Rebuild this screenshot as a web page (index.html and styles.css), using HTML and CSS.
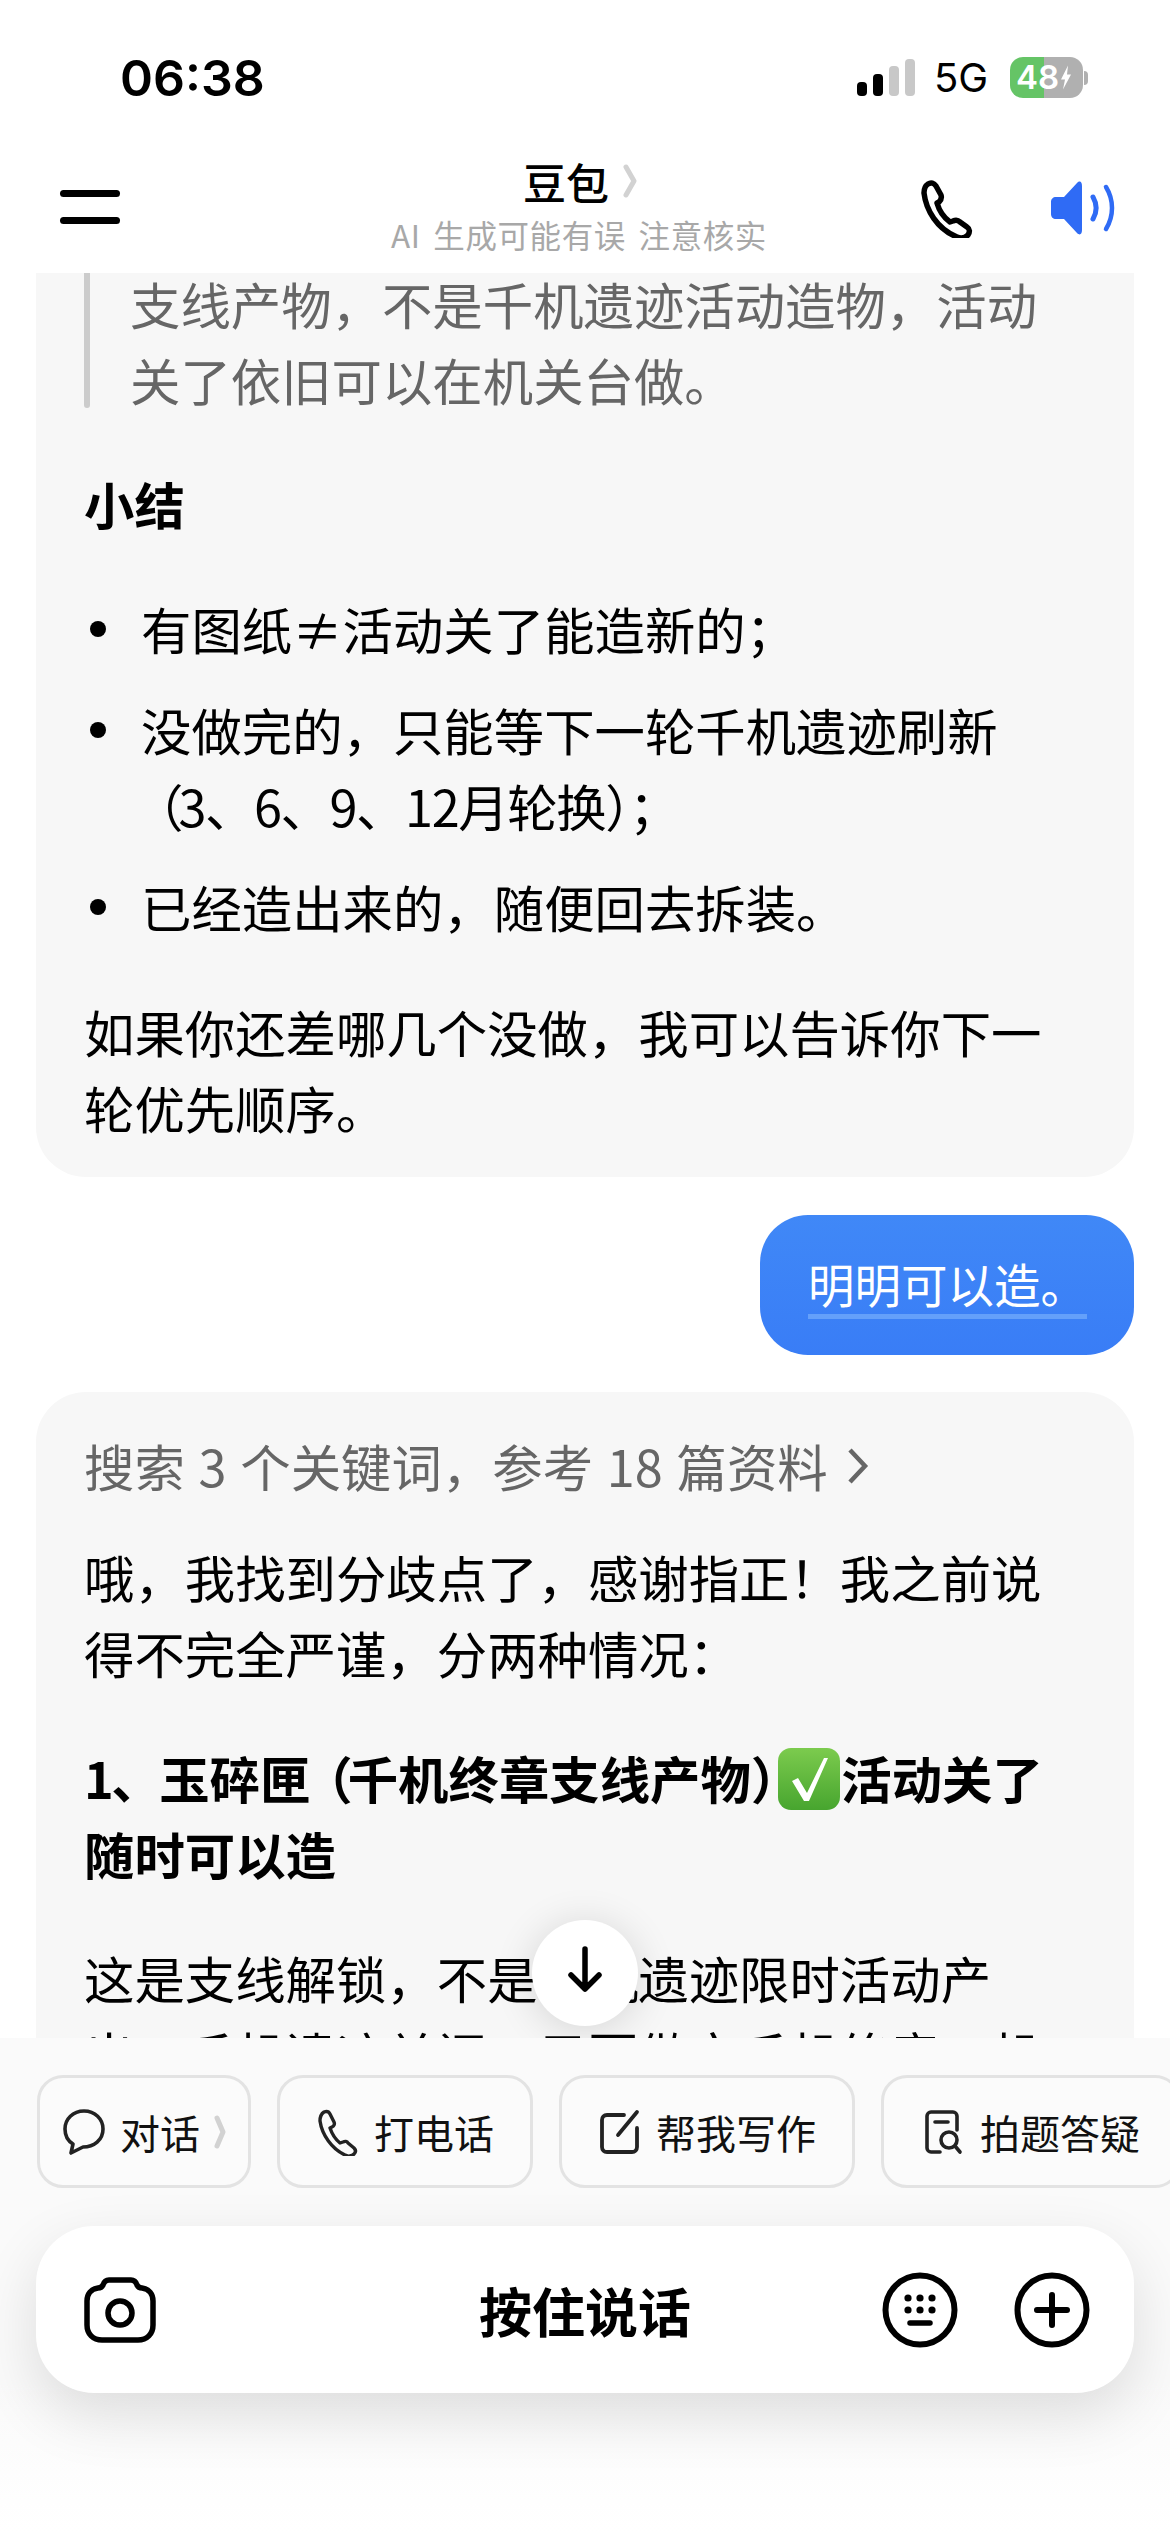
FILE: index.html
```html
<!DOCTYPE html>
<html lang="zh">
<head>
<meta charset="utf-8">
<title>豆包</title>
<link rel="stylesheet" href="styles.css">
</head>
<body>
<div class="page">
  <div class="status">
    <span class="time">06:38</span>
    <div class="status-right">
      <div class="signal"><i class="on b1"></i><i class="on b2"></i><i class="b3"></i><i class="b4"></i></div>
      <span class="net">5G</span>
      <div class="battery"><span class="batt-text">48</span><svg class="bolt" viewBox="0 0 12 24"><path d="M8 0 1 14h4l-2 10 8-15H7z" fill="#fff"/></svg></div>
      <i class="nub"></i>
    </div>
  </div>

  <header class="nav">
    <div class="menu"><i></i><i></i></div>
    <div class="title">
      <div class="title-row"><span class="name">豆包</span><svg class="title-chev" viewBox="0 0 14 34"><path d="M3 3l8 14-8 14" fill="none" stroke="#d2d2d2" stroke-width="5" stroke-linecap="round" stroke-linejoin="round"/></svg></div>
      <div class="sub">AI 生成可能有误 注意核实</div>
    </div>
    <div class="nav-actions">
      <svg class="ic-phone" viewBox="0 0 58 58"><path d="M8 4c3-2 6-1 8 2l5 9c1 3 0 5-2 7l-2 1c2 7 6 14 13 19l3-1c2-1 5-1 7 1l7 5c3 2 3 5 1 8-3 3-7 4-11 2C17 49 6 30 4 13c0-4 1-7 4-9z" fill="none" stroke="#000" stroke-width="5.5" stroke-linejoin="round"/></svg>
      <svg class="ic-sound" viewBox="0 0 64 54"><path d="M26 2c3-3 5-1 5 3v44c0 4-2 6-5 3L13 38H5c-3 0-5-2-5-5V21c0-3 2-5 5-5h8z" fill="#2f6bf5"/><path d="M42 16c4 7 4 15 0 22" fill="none" stroke="#2f6bf5" stroke-width="5" stroke-linecap="round"/><path d="M55 6c8 13 8 29 0 42" fill="none" stroke="#2f6bf5" stroke-width="4.5" stroke-linecap="round"/></svg>
    </div>
  </header>

  <main class="chat">
    <section class="card first">
      <blockquote class="quote">支线产物&#xFF0C;不是千机遗迹活动造物&#xFF0C;活动关了依旧可以在机关台做。</blockquote>
      <p class="strong">小结</p>
      <ul class="list">
        <li>有图纸≠活动关了能造新的&#xFF1B;</li>
        <li>没做完的&#xFF0C;只能等下一轮千机遗迹刷新<span class="open-paren">&#xFF08;</span><span class="dates">3、6、9、12月轮换&#xFF09;&#xFF1B;</span></li>
        <li>已经造出来的&#xFF0C;随便回去拆装。</li>
      </ul>
      <p class="para">如果你还差哪几个没做&#xFF0C;我可以告诉你下一轮优先顺序。</p>
    </section>

    <div class="user-row"><div class="bubble"><span class="bubble-text">明明可以造。</span></div></div>

    <section class="card second">
      <div class="search">搜索 3 个关键词&#xFF0C;参考 18 篇资料<svg class="search-chev" viewBox="0 0 24 40"><path d="M4 4l15 16L4 36" fill="none" stroke="#666" stroke-width="4.5"/></svg></div>
      <p class="para tight">哦&#xFF0C;我找到分歧点了&#xFF0C;感谢指正&#xFF01;我之前说得不完全严谨&#xFF0C;分两种情况&#xFF1A;</p>
      <p class="strong heading"><span class="num">1、</span>玉碎匣<span class="open-paren">&#xFF08;</span>千机终章支线产物<span class="close-paren">&#xFF09;</span><svg class="check" viewBox="0 0 64 64"><defs><linearGradient id="g" x1="0" y1="0" x2="0" y2="1"><stop offset="0" stop-color="#7ccb4e"/><stop offset="1" stop-color="#47a52f"/></linearGradient></defs><rect x="1" y="1" width="62" height="62" rx="13" fill="url(#g)"/><path d="M15 34l6-3 9 15L47 11h4L32 54h-5z" fill="#fff"/></svg>活动关了随时可以造</p>
      <p class="para">这是支线解锁&#xFF0C;不是千机遗迹限时活动产出。千机遗迹关闭&#xFF0C;只要做完千机终章&#xFF0C;机关台依然可以造。</p>
    </section>

    <button class="scroll-down" type="button"><svg viewBox="0 0 40 50"><path d="M20 4v40M6 30l14 14 14-14" fill="none" stroke="#000" stroke-width="5.5" stroke-linecap="round" stroke-linejoin="round"/></svg></button>
  </main>

  <footer class="dock">
    <div class="chips">
      <div class="chip c1"><svg class="chip-ic" viewBox="0 0 44 48"><path d="M22 3c11 0 19 8 19 18 0 11-9 18-20 18l-12 6 2-9C6 33 3 28 3 21 3 11 11 3 22 3z" fill="none" stroke="#222" stroke-width="3.6" stroke-linejoin="round"/></svg><span>对话</span><svg class="chip-chev" viewBox="0 0 12 34"><path d="M3 3l6 14-6 14" fill="none" stroke="#d2d2d2" stroke-width="5" stroke-linecap="round" stroke-linejoin="round"/></svg></div>
      <div class="chip c2"><svg class="chip-ic" viewBox="0 0 44 48"><path d="M8 4c3-1 5 0 6 2l4 8c1 2 0 4-2 5l-2 1c2 6 5 11 10 15l3-1c2-1 4-1 5 1l6 5c2 2 2 4 0 6-2 2-6 3-9 1C16 41 6 27 4 13c0-4 1-7 4-9z" fill="none" stroke="#222" stroke-width="3.4" stroke-linejoin="round"/></svg><span>打电话</span></div>
      <div class="chip c3"><svg class="chip-ic" viewBox="0 0 44 48"><path d="M26 7H9c-3 0-5 2-5 5v27c0 3 2 5 5 5h25c3 0 5-2 5-5V20" fill="none" stroke="#222" stroke-width="3.8" stroke-linecap="round"/><path d="M20 27 39 4" fill="none" stroke="#222" stroke-width="3.8" stroke-linecap="round"/></svg><span>帮我写作</span></div>
      <div class="chip c4"><svg class="chip-ic" viewBox="0 0 44 48"><path d="M18 44H9c-2 0-4-2-4-4V8c0-2 2-4 4-4h22c2 0 4 2 4 4v14" fill="none" stroke="#222" stroke-width="3.6" stroke-linecap="round"/><path d="M13 14h13" stroke="#222" stroke-width="3.6" stroke-linecap="round"/><circle cx="27" cy="32" r="8" fill="none" stroke="#222" stroke-width="3.6"/><path d="M33 38l5 6" stroke="#222" stroke-width="3.6" stroke-linecap="round"/></svg><span>拍题答疑</span></div>
    </div>
    <div class="input">
      <svg class="input-cam" viewBox="0 0 72 66"><path d="M25 3h22c3 0 5 2 6 5 1 2 2 3 5 3 7 1 11 6 11 13v24c0 9-6 15-15 15H18C9 63 3 57 3 48V24c0-7 4-12 11-13 3 0 4-1 5-3 1-3 3-5 6-5z" fill="none" stroke="#000" stroke-width="5.5" stroke-linejoin="round"/><circle cx="36" cy="36" r="12" fill="none" stroke="#000" stroke-width="5.5"/></svg>
      <span class="talk">按住说话</span>
      <svg class="input-ic" viewBox="0 0 76 76"><circle cx="38" cy="38" r="34.5" fill="none" stroke="#000" stroke-width="6"/><g fill="#000"><circle cx="26" cy="26" r="3.6"/><circle cx="38" cy="26" r="3.6"/><circle cx="50" cy="26" r="3.6"/><circle cx="26" cy="38" r="3.6"/><circle cx="38" cy="38" r="3.6"/><circle cx="50" cy="38" r="3.6"/></g><path d="M28 51h20" stroke="#000" stroke-width="5.5" stroke-linecap="round"/></svg>
      <svg class="input-ic plus" viewBox="0 0 76 76"><circle cx="38" cy="38" r="34.5" fill="none" stroke="#000" stroke-width="6"/><path d="M38 23v30M23 38h30" stroke="#000" stroke-width="6" stroke-linecap="round"/></svg>
    </div>
  </footer>
</div>
</body>
</html>
```

FILE: styles.css
```css
* { box-sizing: border-box; }
html, body { margin: 0; padding: 0; background: #fff; }
body { font-family: "Noto Sans CJK SC", "Noto Sans", sans-serif; color: #000; }
.page { width: 1170px; height: 2532px; display: flex; flex-direction: column; overflow: hidden; position: relative; }

.status { height: 130px; flex: none; display: flex; justify-content: space-between; padding: 52px 82px 0 120px; }
.time { font-family: Inter, "Liberation Sans", sans-serif; font-weight: 600; font-size: 50px; line-height: 52px; }
.status-right { display: flex; align-items: flex-start; height: 52px; }
.signal { display: flex; align-items: flex-end; gap: 6px; height: 37px; margin-top: 7px; margin-right: 19px; }
.signal i { width: 10px; background: #c8c8c8; border-radius: 4px; }
.signal .on { background: #000; }
.signal .b1 { height: 14px; }
.signal .b2 { height: 22px; }
.signal .b3 { height: 30px; }
.signal .b4 { height: 37px; }
.net { font-family: Inter, "Liberation Sans", sans-serif; font-size: 40px; line-height: 52px; width: 76px; }
.battery { width: 73px; height: 41px; margin-top: 5px; border-radius: 13px; background: linear-gradient(90deg, #65c466 0 47%, #b0b0b0 47%); display: flex; align-items: center; padding-left: 6px; }
.batt-text { font-family: Inter, "Liberation Sans", sans-serif; font-weight: 600; font-size: 33px; line-height: 41px; color: #fff; }
.bolt { width: 12px; height: 27px; margin-left: 1px; }
.nub { width: 4px; height: 14px; margin-top: 19px; margin-left: 1px; background: #b0b0b0; border-radius: 0 4px 4px 0; }

.nav { height: 143px; flex: none; position: relative; display: flex; justify-content: space-between; padding: 0 55px 0 60px; }
.menu { display: flex; flex-direction: column; gap: 20px; padding-top: 60px; width: 60px; }
.menu i { display: block; height: 7px; background: #000; border-radius: 4px; }
.title { position: absolute; left: 0; right: 0; top: 26px; display: flex; flex-direction: column; align-items: center; }
.title-row { display: flex; align-items: center; height: 50px; margin-bottom: 8px; margin-left: -10px; }
.name { font-size: 43px; line-height: 50px; font-weight: 500; }
.title-chev { width: 14px; height: 34px; margin-left: 14px; }
.sub { font-size: 31.5px; line-height: 40px; color: #a8a8a8; font-weight: 400; word-spacing: 5px; letter-spacing: 0.6px; margin-left: -12px; }
.nav-actions { display: flex; align-items: flex-start; gap: 73px; padding-top: 50px; position: relative; }
.ic-phone { width: 58px; height: 58px; }
.ic-sound { width: 64px; height: 54px; margin-top: 1px; }

.chat { flex: 1; min-height: 0; overflow: hidden; position: relative; background: #fff; display: flex; flex-direction: column; }
.card { flex: none; margin: 0 36px; background: #f7f7f7; border-radius: 50px; padding: 0 48px; font-size: 50.4px; line-height: 76px; }
.card p { margin: 0; }
.first { margin-top: -40px; padding-top: 33px; padding-bottom: 31px; border-radius: 0 0 50px 50px; }
.quote { margin: 0 0 48px; padding: 0 10px 0 46px; position: relative; color: #666; }
.quote::before { content: ""; position: absolute; left: 0; top: 0; bottom: 10px; width: 6px; background: #ccc; border-radius: 3px; }
.strong { font-weight: 700; }
.list { margin: 49px 0; padding: 0; list-style: none; }
.list li { position: relative; padding-left: 57px; margin-bottom: 25px; }
.list li:last-child { margin-bottom: 0; }
.list li::before { content: ""; position: absolute; left: 6px; top: 30px; width: 16px; height: 16px; border-radius: 50%; background: #000; }
.open-paren { margin-left: -8px; margin-right: -5px; }
.dates { letter-spacing: -1.4px; }
.close-paren { margin-right: -24px; }
.num { letter-spacing: -2.5px; }

.user-row { flex: none; display: flex; justify-content: flex-end; padding: 38px 36px 37px; }
.bubble { width: 374px; height: 140px; padding: 36px 47px 0 48px; border-radius: 48px; background: linear-gradient(180deg, #4088f7, #397df6); color: #fff; font-size: 46.5px; line-height: 60px; }
.bubble-text { display: inline-block; white-space: nowrap; border-bottom: 5px solid #64a0fa; line-height: 63px; }

.second { padding-top: 36px; border-radius: 50px 50px 0 0; flex: 1; }
.search { display: flex; align-items: center; color: #666; height: 76px; margin-bottom: 35px; white-space: nowrap; word-spacing: 2.5px; }
.search-chev { width: 24px; height: 40px; margin-left: 18px; }
.card .tight { margin-bottom: 49px; }
.card .heading { margin-bottom: 48px; }
.check { width: 64px; height: 64px; vertical-align: -12px; }

.scroll-down { position: absolute; left: 532px; top: 1647px; width: 106px; height: 106px; border: 0; padding: 0; border-radius: 50%; background: #fff; box-shadow: 0 4px 40px rgba(0,0,0,.14); display: flex; align-items: center; justify-content: center; }
.scroll-down svg { width: 40px; height: 50px; margin-top: -6px; }

.dock { height: 494px; flex: none; position: relative; background: linear-gradient(180deg, #fafafa, #fafafa 70%, #fff); padding: 37px 0 0 37px; }
.chips { display: flex; gap: 26px; width: 1133px; overflow: hidden; height: 113px; }
.chip { flex: none; height: 113px; border: 3px solid #e3e3e3; border-radius: 26px; display: flex; align-items: center; justify-content: center; font-size: 40px; color: #111; background: #fbfbfb; }
.c1 { width: 214px; }
.c2 { width: 256px; }
.c3 { width: 296px; }
.c4 { width: 300px; }
.chip-ic { width: 44px; height: 48px; margin-right: 14px; flex: none; }
.chip-chev { width: 12px; height: 34px; margin-left: 14px; }
.input { margin: 38px 0 0 -1px; width: 1098px; height: 167px; background: #fff; border-radius: 58px; box-shadow: 0 22px 60px rgba(0,0,0,.12); display: flex; align-items: center; padding: 0 44px 0 48px; position: relative; }
.input-cam { width: 72px; height: 66px; flex: none; }
.talk { position: absolute; left: 0; right: 0; text-align: center; font-size: 53px; font-weight: 700; line-height: 70px; }
.input-ic { width: 76px; height: 76px; margin-left: auto; flex: none; position: relative; }
.input-ic.plus { margin-left: 56px; }
```
